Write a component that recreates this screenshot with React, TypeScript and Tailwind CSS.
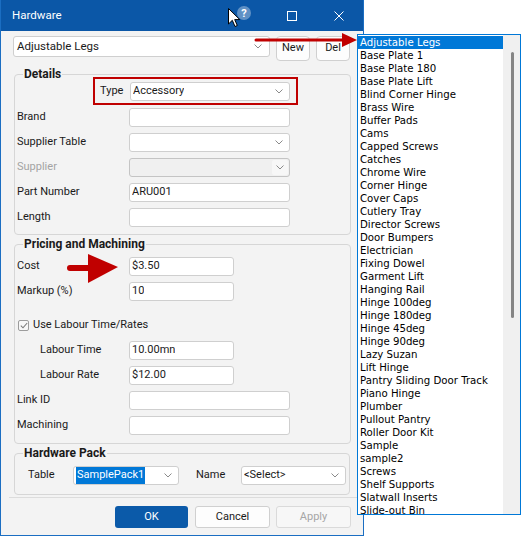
import type { ReactNode } from "react";

/* Hardware dialog with its item dropdown opened to the right. */

const ITEMS = [
  "Adjustable Legs",
  "Base Plate 1",
  "Base Plate 180",
  "Base Plate Lift",
  "Blind Corner Hinge",
  "Brass Wire",
  "Buffer Pads",
  "Cams",
  "Capped Screws",
  "Catches",
  "Chrome Wire",
  "Corner Hinge",
  "Cover Caps",
  "Cutlery Tray",
  "Director Screws",
  "Door Bumpers",
  "Electrician",
  "Fixing Dowel",
  "Garment Lift",
  "Hanging Rail",
  "Hinge 100deg",
  "Hinge 180deg",
  "Hinge 45deg",
  "Hinge 90deg",
  "Lazy Suzan",
  "Lift Hinge",
  "Pantry Sliding Door Track",
  "Piano Hinge",
  "Plumber",
  "Pullout Pantry",
  "Roller Door Kit",
  "Sample",
  "sample2",
  "Screws",
  "Shelf Supports",
  "Slatwall Inserts",
  "Slide-out Bin",
];

function Chevron() {
  return (
    <svg width="8" height="5" viewBox="0 0 8 5" className="shrink-0">
      <polyline points="0.5,0.5 4,4 7.5,0.5" fill="none" stroke="#8a8a8a" strokeWidth="1" />
    </svg>
  );
}

function Field({ value = "", w, combo = false }: { value?: string; w: string; combo?: boolean }) {
  return (
    <div className={`flex h-[19px] shrink-0 items-center justify-between rounded-[3px] border border-[#cfcfcf] bg-white pl-[2px] pr-[6px] ${w}`}>
      <span className="truncate">{value}</span>
      {combo && <Chevron />}
    </div>
  );
}

function Row({ label, children, lw = "w-[114px] pl-[2px]", muted = false }: { label: string; children: ReactNode; lw?: string; muted?: boolean }) {
  return (
    <div className="flex h-[25px] items-center">
      <span className={`shrink-0 ${lw} ${muted ? "text-[#a3a3a3]" : ""}`}>{label}</span>
      {children}
    </div>
  );
}

function Group({ title, className, children }: { title: string; className: string; children: ReactNode }) {
  return (
    <div className={`relative ml-[1px] rounded-[4px] border border-[#d6d6d6] ${className}`}>
      <span className="absolute left-[8px] top-[-9px] bg-[#f3f3f3] px-[1px] text-[12px] font-bold leading-[16px] text-[#1a1a1a]">
        {title}
      </span>
      {children}
    </div>
  );
}

export default function App() {
  return (
    <div className="relative h-[536px] w-[521px] overflow-hidden bg-white font-['Roboto',sans-serif] text-[11px] text-[#1a1a1a]">
      <div className="flex h-[536px] w-[364px] flex-col border-x border-b border-[#1b6ec2] bg-[#f3f3f3]">
        {/* title bar */}
        <div className="flex h-[31px] shrink-0 items-center bg-[#0b57a7] pl-[11px] pr-[19px] text-white">
          <span className="text-[11.5px]">Hardware</span>
          <span className="flex-1" />
          <span className="-mt-[5px] flex h-[14px] w-[14px] items-center justify-center rounded-full bg-white/35 text-[11px] font-bold leading-none">?</span>
          <span className="ml-[36px] h-[10px] w-[10px] border border-white" />
          <svg width="10" height="10" viewBox="0 0 10 10" className="ml-[37px]">
            <path d="M0.5 0.5 L9.5 9.5 M9.5 0.5 L0.5 9.5" stroke="#fff" strokeWidth="1" />
          </svg>
        </div>

        <div className="flex flex-col pl-[12px]">
          <div className="mt-[5px] flex items-start">
            <div className="flex h-[21px] w-[257px] items-center justify-between rounded-[3px] border border-[#cfcfcf] bg-white pl-[3px] pr-[7px] text-[11.5px]">
              <span>Adjustable Legs</span>
              <Chevron />
            </div>
            <button className="ml-[6px] h-[25px] w-[34px] rounded-[4px] border border-[#d0d0d0] bg-[#fdfdfd]">New</button>
            <button className="ml-[6px] h-[25px] w-[34px] rounded-[4px] border border-[#d0d0d0] bg-[#fdfdfd]">Del</button>
          </div>

          <Group title="Details" className="mt-[13px] w-[337px] pb-[4px] pt-[2px]">
            <div className="ml-[78px] flex h-[28px] w-[205px] items-center border-2 border-[#c00000] pl-[5px]">
              <span className="w-[30px] shrink-0">Type</span>
              <Field value="Accessory" w="w-[160px]" combo />
            </div>
            <Row label="Brand"><Field w="w-[161px]" /></Row>
            <Row label="Supplier Table"><Field w="w-[161px]" combo /></Row>
            <Row label="Supplier" muted>
              <div className="flex h-[19px] w-[161px] items-center justify-end rounded-[3px] border border-[#c4c4c4] bg-[#f0f0f0] pr-[1px]">
                <div className="flex h-[15px] w-[16px] items-center justify-center rounded-[2px] bg-[#f7f7f7]">
                  <Chevron />
                </div>
              </div>
            </Row>
            <Row label="Part Number"><Field value="ARU001" w="w-[161px]" /></Row>
            <Row label="Length"><Field w="w-[161px]" /></Row>
          </Group>

          <Group title="Pricing and Machining" className="mt-[9px] w-[337px] pb-[5px] pt-[9px]">
            <Row label="Cost"><Field value="$3.50" w="w-[105px]" /></Row>
            <Row label="Markup (%)"><Field value="10" w="w-[105px]" /></Row>
            <div className="mt-[9px] flex h-[25px] items-center pl-[3px]">
              <span className="flex h-[11px] w-[11px] items-center justify-center rounded-[2px] border border-[#9c9c9c] bg-[#f7f7f7]">
                <svg width="8" height="7" viewBox="0 0 8 7">
                  <polyline points="0.8,3.6 3,5.8 7.2,1" fill="none" stroke="#7a7a7a" strokeWidth="1.1" />
                </svg>
              </span>
              <span className="ml-[4px]">Use Labour Time/Rates</span>
            </div>
            <Row label="Labour Time" lw="w-[114px] pl-[25px]"><Field value="10.00mn" w="w-[105px]" /></Row>
            <Row label="Labour Rate" lw="w-[114px] pl-[25px]"><Field value="$12.00" w="w-[105px]" /></Row>
            <Row label="Link ID"><Field w="w-[161px]" /></Row>
            <Row label="Machining"><Field w="w-[161px]" /></Row>
          </Group>

          <Group title="Hardware Pack" className="mt-[9px] w-[336px] pb-[6px] pt-[9px]">
            <div className="flex h-[25px] items-center">
              <span className="w-[58px] shrink-0 pl-[13px]">Table</span>
              <div className="flex h-[19px] w-[106px] items-center justify-between rounded-[3px] border border-[#cfcfcf] bg-white pl-[2px] pr-[6px]">
                <span className="bg-[#0078d7] px-[1px] text-white">SamplePack1</span>
                <Chevron />
              </div>
              <span className="ml-[17px] w-[45px] shrink-0">Name</span>
              <Field value="<Select>" w="w-[105px]" combo />
            </div>
          </Group>

          <div className="-ml-[4px] mt-[2px] h-px w-[355px] bg-[#dcdcdc]" />

          <div className="mt-[8px] flex pl-[102px]">
            <button className="h-[22px] w-[73px] rounded-[3px] bg-[#0b5aa9] text-white">OK</button>
            <button className="ml-[7px] h-[22px] w-[75px] rounded-[3px] border border-[#d0d0d0] bg-[#fdfdfd]">Cancel</button>
            <button className="ml-[6px] h-[22px] w-[75px] rounded-[3px] border border-[#dadada] bg-[#f7f7f7] text-[#a6a6a6]">Apply</button>
          </div>
        </div>
      </div>

      {/* mouse cursor over the title bar */}
      <svg width="13" height="20" viewBox="0 0 13 20" className="absolute left-[228px] top-[8px]">
        <path d="M0.5 0.5 L0.5 16 L4.3 12.3 L7 18.5 L9.3 17.5 L6.7 11.6 L11.8 11.6 Z" fill="#fff" stroke="#000" strokeWidth="1" strokeLinejoin="round" />
      </svg>

      {/* callout arrows */}
      <svg width="110" height="20" viewBox="0 0 110 20" className="absolute left-[250px] top-[30px]">
        <line x1="6" y1="10" x2="95" y2="10" stroke="#c00000" strokeWidth="3" strokeLinecap="round" />
        <polygon points="92,3 107,10 92,17" fill="#c00000" />
      </svg>
      <svg width="62" height="36" viewBox="0 0 62 36" className="absolute left-[60px] top-[250px]">
        <line x1="10" y1="18" x2="31" y2="18" stroke="#c00000" strokeWidth="6" strokeLinecap="round" />
        <polygon points="28,4 58,17 28,33" fill="#c00000" />
      </svg>

      {/* opened dropdown list */}
      <div className="absolute left-[357px] top-[34px] flex h-[481px] w-[164px] overflow-hidden border border-[#0078d7] bg-white font-['DejaVu_Sans',sans-serif] text-[10.2px] text-black">
        <div className="flex w-[145px] flex-col pt-px">
          {ITEMS.map((it, i) => (
            <div
              key={it}
              className={`h-[13px] shrink-0 whitespace-nowrap pl-[2px] leading-[13px] ${i === 0 ? "bg-[#0078d7] text-white" : ""}`}
            >
              {it}
            </div>
          ))}
        </div>
        <div className="w-[17px] shrink-0 bg-[#f0f0f0] pl-[8px] pt-[17px]">
          <div className="h-[266px] w-[3px] rounded-full bg-[#858585]" />
        </div>
      </div>
    </div>
  );
}
